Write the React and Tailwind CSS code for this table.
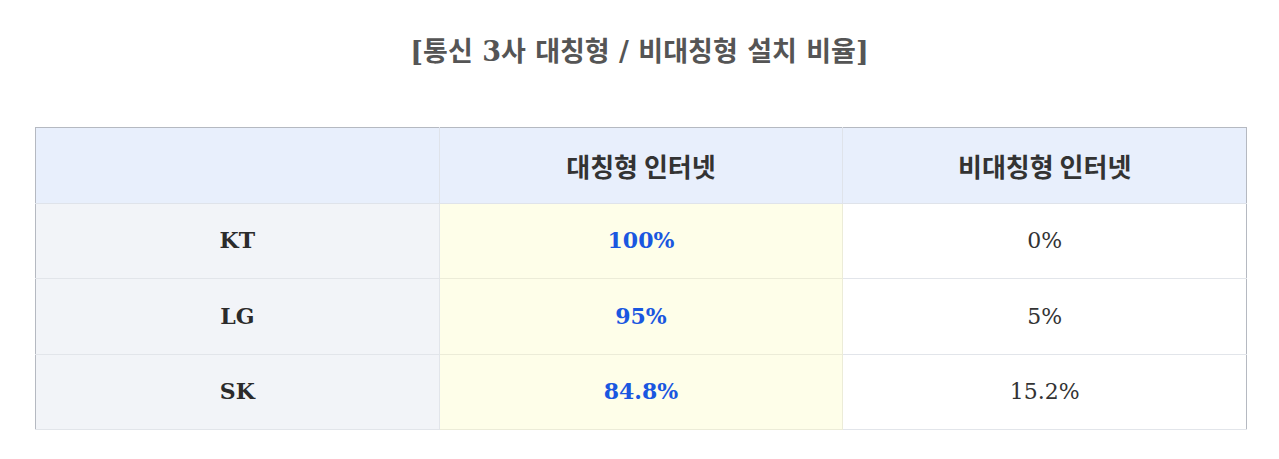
export default function App() {
  const rows = [
    ["KT", "100%", "0%"],
    ["LG", "95%", "5%"],
    ["SK", "84.8%", "15.2%"],
  ];
  const font = { fontFamily: "'DejaVu Serif','Noto Sans CJK KR',serif" };
  return (
    <div className="w-[1279px] h-[459px] bg-white" style={font}>
      <h2 className="pt-[35px] text-center text-[27px] leading-[34px] font-bold text-[#555555]">
        [통신 3사 대칭형 / 비대칭형 설치 비율]
      </h2>
      <table className="mt-[58px] ml-[35px] w-[1212px] border-collapse border border-[#b5b9c1] table-fixed">
        <thead>
          <tr className="h-[75.5px] bg-[#e8effc]">
            <th className="border border-[#dfe3ea] border-l-[#b5b9c1] border-t-[#b5b9c1]"></th>
            <th className="border border-[#dfe3ea] border-t-[#b5b9c1] text-[26px] font-bold text-[#333333] font-['Noto_Sans_CJK_KR',sans-serif]">대칭형 인터넷</th>
            <th className="border border-[#dfe3ea] border-t-[#b5b9c1] border-r-[#b5b9c1] text-[26px] font-bold text-[#333333] font-['Noto_Sans_CJK_KR',sans-serif]">비대칭형 인터넷</th>
          </tr>
        </thead>
        <tbody>
          {rows.map((r) => (
            <tr key={r[0]} className="h-[75.5px]">
              <td className="border border-[#e2e5ea] border-l-[#b5b9c1] bg-[#f2f4f8] text-center text-[22px] font-bold text-[#2b2b2b]">{r[0]}</td>
              <td className="border border-[#ececd8] bg-[#fefee9] text-center text-[22px] font-bold text-[#1a57e0]">{r[1]}</td>
              <td className="border border-[#e2e5ea] border-r-[#b5b9c1] bg-white text-center text-[22px] text-[#333333]">{r[2]}</td>
            </tr>
          ))}
        </tbody>
      </table>
    </div>
  );
}
